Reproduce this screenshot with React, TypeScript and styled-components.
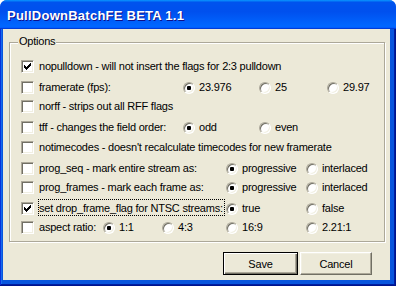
import React from 'react';
import styled, { createGlobalStyle } from 'styled-components';

const Global = createGlobalStyle`
  html, body { margin: 0; padding: 0; background: #ffffff; }
  body { font-family: "Liberation Sans", Arial, sans-serif; font-size: 11px; color: #000; letter-spacing: -0.22px; }
`;

const Window = styled.div`
  width: 396px;
  height: 286px;
  display: flex;
  flex-direction: column;
  border-radius: 7px 7px 0 0;
  overflow: hidden;
  background: #0855dd;
`;

const TitleBar = styled.div`
  height: 29px;
  flex-shrink: 0;
  display: flex;
  align-items: center;
  padding: 1px 0 0 7px;
  box-sizing: border-box;
  background: linear-gradient(180deg, #0997ff, #0053ee 8%, #0050ee 40%, #0066ff 88%, #0066ff 93%, #005bff 95%, #003dd7 96%, #003dd7);
  color: #fff;
  font-family: "Liberation Sans", Arial, sans-serif;
  font-weight: bold;
  font-size: 13px;
  text-shadow: 1px 1px #0f1089;
  letter-spacing: 0.25px;
`;

const Frame = styled.div`
  flex: 1;
  display: flex;
  padding: 0 6px 6px 3px;
  background: #0855dd;
  box-shadow: inset -1px -1px #00138c, inset 1px 0 #0831d9, inset -2px -2px #001ea0, inset 2px 0 #166aee;
`;

const Body = styled.div`
  flex: 1;
  display: flex;
  flex-direction: column;
  background: #ece9d8;
  padding: 13px 5px 0 6px;
`;

const GroupBox = styled.div`
  position: relative;
  height: 200px;
  box-sizing: border-box;
  border: 1px solid #aca899;
  box-shadow: inset 1px 1px #ffffff, 1px 1px #ffffff;
  padding: 14px 0 3px 11px;
  display: flex;
  flex-direction: column;
`;

const Legend = styled.span`
  position: absolute;
  top: -8px;
  left: 8px;
  padding: 0 1px;
  line-height: 13px;
  background: #ece9d8;
`;

const Row = styled.div<{ $h: number }>`
  display: flex;
  align-items: flex-start;
  height: ${p => p.$h}px;
  padding-top: 3px;
  box-sizing: border-box;
`;

const Cell = styled.div<{ $w?: number }>`
  display: flex;
  align-items: flex-start;
  gap: 5px;
  flex-shrink: 0;
  ${p => (p.$w ? `width: ${p.$w}px;` : '')}
`;

const Option = styled.div<{ $w?: number }>`
  display: flex;
  align-items: flex-start;
  gap: 4px;
  flex-shrink: 0;
  ${p => (p.$w ? `width: ${p.$w}px;` : '')}
`;

const Text = styled.span<{ $focus?: boolean }>`
  line-height: 13px;
  white-space: nowrap;
  ${p =>
    p.$focus
      ? `border: 1px dotted #000; padding: 2px 1px 0 0; margin: -3px -2px -1px -1px;`
      : ''}
`;

const CheckBox = styled.span`
  width: 13px;
  height: 13px;
  box-sizing: border-box;
  flex-shrink: 0;
  border: 1px solid;
  border-color: #aca899 #ffffff #ffffff #aca899;
  box-shadow: inset 1px 1px #716f64, inset -1px -1px #f1efe2;
  background: #fff;
  padding: 2px;
  display: flex;
`;

const Radio = styled.span<{ $on?: boolean }>`
  position: relative;
  width: 12px;
  height: 12px;
  margin-top: 1px;
  box-sizing: border-box;
  flex-shrink: 0;
  border-radius: 50%;
  border: 1px solid;
  border-color: #aca899 #ffffff #ffffff #aca899;
  box-shadow: inset 1px 1px #716f64, inset -1px -1px #f1efe2;
  background: #fff;
  &::after {
    content: '';
    display: ${p => (p.$on ? 'block' : 'none')};
    position: absolute;
    left: 3px;
    top: 3px;
    width: 4px;
    height: 4px;
    border-radius: 1px;
    background: #000;
  }
`;

const Footer = styled.div`
  display: flex;
  justify-content: flex-end;
  gap: 2px;
  margin-top: 10px;
  padding-right: 13px;
`;

const Button = styled.button<{ $default?: boolean; $w: number }>`
  width: ${p => p.$w}px;
  height: 23px;
  padding: 0;
  margin: 0;
  font-family: "Liberation Sans", Arial, sans-serif;
  font-size: 11px;
  letter-spacing: -0.17px;
  color: #000;
  background: #ece9d8;
  border: 1px solid;
  border-color: ${p => (p.$default ? '#000' : '#ffffff #716f64 #716f64 #ffffff')};
  box-shadow: ${p =>
    p.$default
      ? 'inset 1px 1px #ffffff, inset -1px -1px #716f64, inset -2px -2px #aca899'
      : 'inset -1px -1px #aca899, inset 1px 1px #f1efe2'};
`;

const CheckMark = () => (
  <svg width="7" height="7" viewBox="0 0 7 7" shapeRendering="crispEdges">
    <path
      fill="#000"
      d="M6 0h1v3h-1zM5 1h1v3h-1zM4 2h1v3h-1zM3 3h1v3h-1zM2 4h1v3h-1zM1 3h1v3h-1zM0 2h1v3h-1z"
    />
  </svg>
);

type Opt = { label: string; on?: boolean; w?: number };
type RowData = { h: number; label: string; checked?: boolean; focus?: boolean; w?: number; opts?: Opt[] };

const rows: RowData[] = [
  { h: 21, label: 'nopulldown - will not insert the flags for 2:3 pulldown', checked: true },
  {
    h: 19,
    label: 'framerate (fps):',
    w: 162,
    opts: [
      { label: '23.976', on: true, w: 76 },
      { label: '25', w: 68 },
      { label: '29.97' },
    ],
  },
  { h: 21, label: 'norff - strips out all RFF flags' },
  {
    h: 20,
    label: 'tff - changes the field order:',
    w: 162,
    opts: [{ label: 'odd', on: true, w: 76 }, { label: 'even' }],
  },
  { h: 21, label: "notimecodes - doesn't recalculate timecodes for new framerate" },
  {
    h: 19,
    label: 'prog_seq - mark entire stream as:',
    w: 205,
    opts: [{ label: 'progressive', on: true, w: 80 }, { label: 'interlaced' }],
  },
  {
    h: 21,
    label: 'prog_frames - mark each frame as:',
    w: 205,
    opts: [{ label: 'progressive', on: true, w: 80 }, { label: 'interlaced' }],
  },
  {
    h: 19,
    label: 'set drop_frame_flag for NTSC streams:',
    checked: true,
    focus: true,
    w: 205,
    opts: [{ label: 'true', on: true, w: 80 }, { label: 'false' }],
  },
  {
    h: 20,
    label: 'aspect ratio:',
    w: 82,
    opts: [
      { label: '1:1', on: true, w: 59 },
      { label: '4:3', w: 64 },
      { label: '16:9', w: 80 },
      { label: '2.21:1' },
    ],
  },
];

export default function App() {
  return (
    <>
      <Global />
      <Window>
        <TitleBar>PullDownBatchFE BETA 1.1</TitleBar>
        <Frame>
          <Body>
            <GroupBox>
              <Legend>Options</Legend>
              {rows.map(r => (
                <Row key={r.label} $h={r.h}>
                  <Cell $w={r.w}>
                    <CheckBox>{r.checked && <CheckMark />}</CheckBox>
                    <Text $focus={r.focus}>{r.label}</Text>
                  </Cell>
                  {r.opts?.map(o => (
                    <Option key={o.label} $w={o.w}>
                      <Radio $on={o.on} />
                      <Text>{o.label}</Text>
                    </Option>
                  ))}
                </Row>
              ))}
            </GroupBox>
            <Footer>
              <Button $default $w={75}>Save</Button>
              <Button $w={72}>Cancel</Button>
            </Footer>
          </Body>
        </Frame>
      </Window>
    </>
  );
}
